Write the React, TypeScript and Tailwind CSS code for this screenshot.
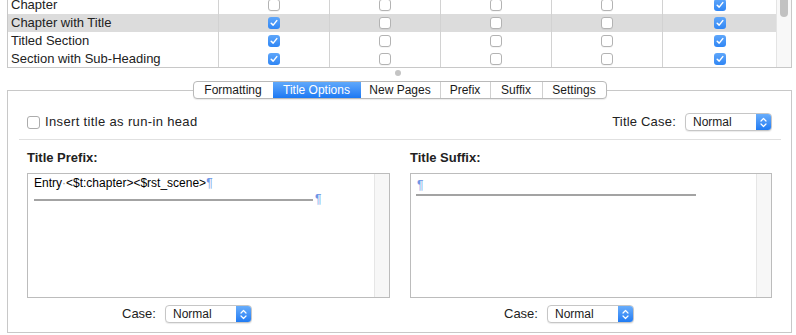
import React from "react";

type Row = { name: string; checks: boolean[]; selected?: boolean };

const rows: Row[] = [
  { name: "Chapter", checks: [false, false, false, false, true] },
  { name: "Chapter with Title", checks: [true, false, false, false, true], selected: true },
  { name: "Titled Section", checks: [true, false, false, false, true] },
  { name: "Section with Sub-Heading", checks: [true, false, false, false, true] },
];

const tabs = [
  { label: "Formatting", w: "w-[79px]" },
  { label: "Title Options", w: "w-[88px]", active: true },
  { label: "New Pages", w: "w-[79px]" },
  { label: "Prefix", w: "w-[50px]" },
  { label: "Suffix", w: "w-[52px]" },
  { label: "Settings", w: "w-[64px]" },
];

function Check({ on }: { on: boolean }) {
  if (on) {
    return (
      <div className="w-[12px] h-[12px] rounded-[3px] bg-gradient-to-b from-[#5ea6fa] to-[#2f86f4] flex items-center justify-center">
        <svg width="8" height="8" viewBox="0 0 8 8">
          <path d="M1.2 4.2 L3.2 6.1 L6.8 1.6" fill="none" stroke="white" strokeWidth="1.5" strokeLinecap="round" strokeLinejoin="round" />
        </svg>
      </div>
    );
  }
  return <div className="w-[12px] h-[12px] rounded-[3px] border border-[#b3b3b3] bg-white shadow-[0_1px_0_rgba(0,0,0,0.04)]" />;
}

function PopUp({ value }: { value: string }) {
  return (
    <div className="w-[87px] h-[18px] flex rounded-[4px] border border-[#c6c6c6] bg-white shadow-[0_1px_1px_rgba(0,0,0,0.08)] overflow-hidden">
      <div className="flex-1 pl-[7px] text-[12px] leading-[16px] text-[#1a1a1a]">{value}</div>
      <div className="w-[15px] bg-gradient-to-b from-[#68adfb] to-[#1f7bf3] flex items-center justify-center">
        <svg width="7" height="11" viewBox="0 0 7 11">
          <path d="M1 4 L3.5 1.5 L6 4 M1 7 L3.5 9.5 L6 7" fill="none" stroke="white" strokeWidth="1.2" strokeLinecap="round" strokeLinejoin="round" />
        </svg>
      </div>
    </div>
  );
}

function Pilcrow() {
  return <span className="text-[#6f96e6]">¶</span>;
}

export default function App() {
  return (
    <div className="w-[796px] h-[335px] bg-white overflow-hidden text-[13px] text-[#222] font-['Liberation_Sans','Helvetica',sans-serif]">
      {/* structure table, scrolled */}
      <div className="ml-[7px] w-[785px] h-[68px] flex border-l border-r border-b border-[#c8c8c8]">
        <div className="flex-1 overflow-hidden">
          <div className="-mt-[4px]">
            {rows.map((r) => (
              <div key={r.name} className={`flex h-[18px] ${r.selected ? "bg-[#dcdcdc]" : ""}`}>
                <div className="w-[211px] border-r border-[#d2d2d2] pl-[3px] leading-[18px]">{r.name}</div>
                {r.checks.map((c, i) => (
                  <div
                    key={i}
                    className={`${i === 4 ? "flex-1" : "w-[111px] border-r border-[#d2d2d2]"} flex items-center justify-center`}
                  >
                    <Check on={c} />
                  </div>
                ))}
              </div>
            ))}
          </div>
        </div>
        <div className="w-[15px] border-l border-[#e4e4e4] bg-[#f8f8f8] px-[3px]">
          <div className="h-[17px] rounded-b-[4px] bg-[#c2c2c2]" />
        </div>
      </div>

      {/* split handle */}
      <div className="h-[22px] flex justify-center pt-[2px]">
        <div className="w-[6px] h-[6px] rounded-full bg-[#c4c4c4]" />
      </div>

      {/* options group */}
      <div className="ml-[7px] w-[785px] h-[243px] border border-[#c8c8c8] flex flex-col">
        <div className="-mt-[10px] flex justify-center">
          <div className="flex h-[18px] rounded-[4px] border border-[#b9b9b9] bg-white shadow-[0_1px_1px_rgba(0,0,0,0.08)] overflow-hidden text-[12px]">
            {tabs.map((t, i) => (
              <div
                key={t.label}
                className={`${t.w} flex items-center justify-center ${
                  t.active
                    ? "bg-gradient-to-b from-[#5fa8fb] to-[#1a78f3] text-white"
                    : "text-[#1a1a1a]"
                } ${i > 0 && !t.active && !tabs[i - 1].active ? "border-l border-[#d0d0d0]" : ""}`}
              >
                {t.label}
              </div>
            ))}
          </div>
        </div>

        <div className="mt-[14px] h-[18px] flex items-center justify-between pl-[19px] pr-[19px]">
          <div className="flex items-center gap-[5px]">
            <div className="w-[13px] h-[13px] rounded-[3px] border border-[#acacac] bg-white" />
            <span className="tracking-[0.35px]">Insert title as run-in head</span>
          </div>
          <div className="flex items-center gap-[9px]">
            <span className="tracking-[0.2px]">Title Case:</span>
            <PopUp value="Normal" />
          </div>
        </div>

        <div className="mt-[8px] ml-[11px] mr-[10px] h-px bg-[#e0e0e0]" />

        <div className="flex gap-[20px] pl-[19px] mt-[10px]">
          {/* prefix */}
          <div className="w-[363px] flex flex-col">
            <div className="h-[16px] font-bold leading-[16px]">Title Prefix:</div>
            <div className="mt-[7px] h-[125px] flex border border-[#bcbcbc] bg-white">
              <div className="flex-1 pl-[6px] pt-[1px] text-[12px] leading-[16px] text-black">
                <div>
                  Entry<span className="text-[#9a9a9a]">·</span>&lt;$t:chapter&gt;&lt;$rst_scene&gt;
                  <Pilcrow />
                </div>
                <div className="flex items-center h-[16px]">
                  <div className="w-[279px] h-[2px] bg-[#a3a3a3] mt-[2px]" />
                  <span className="ml-[2px]">
                    <Pilcrow />
                  </span>
                </div>
              </div>
              <div className="w-[15px] border-l border-[#e6e6e6] bg-[#f7f7f7]" />
            </div>
            <div className="mt-[7px] h-[18px] flex items-center pl-[95px] gap-[9px]">
              <span>Case:</span>
              <PopUp value="Normal" />
            </div>
          </div>

          {/* suffix */}
          <div className="w-[362px] flex flex-col">
            <div className="h-[16px] font-bold leading-[16px]">Title Suffix:</div>
            <div className="mt-[7px] h-[125px] flex border border-[#bcbcbc] bg-white">
              <div className="flex-1 pl-[6px] pt-[3px] text-[12px] leading-[16px]">
                <div>
                  <Pilcrow />
                </div>
                <div className="w-[280px] h-[2px] bg-[#a3a3a3] -ml-[1px] mt-[1px]" />
              </div>
              <div className="w-[15px] border-l border-[#e6e6e6] bg-[#f7f7f7]" />
            </div>
            <div className="mt-[7px] h-[18px] flex items-center pl-[94px] gap-[9px]">
              <span>Case:</span>
              <PopUp value="Normal" />
            </div>
          </div>
        </div>
      </div>
    </div>
  );
}
